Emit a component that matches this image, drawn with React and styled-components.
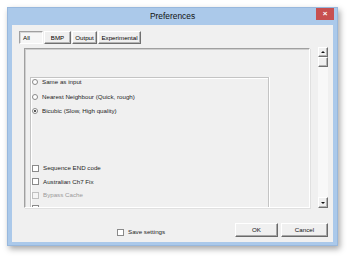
import React from 'react';
import styled, { createGlobalStyle } from 'styled-components';

const Global = createGlobalStyle`
  html, body { margin: 0; padding: 0; background: #ffffff; }
  body {
    width: 350px; height: 260px; overflow: hidden;
    font-family: "Liberation Sans", Arial, sans-serif;
    color: #1e1e1e;
  }
  * { box-sizing: border-box; }
`;

const Stage = styled.div`
  padding: 7px 0 0 7px;
`;

const Window = styled.div`
  width: 331px;
  height: 239px;
  background: #abc9ea;
  border: 1px solid #98b8dd;
  padding: 0 4px 3px;
  display: flex;
  flex-direction: column;
  box-shadow: 2px 3px 6px rgba(0, 0, 0, 0.35);
`;

const TitleBar = styled.div`
  height: 17px;
  display: grid;
  grid-template-columns: 1fr auto 1fr;
  align-items: start;
`;

const Title = styled.div`
  grid-column: 2;
  font-size: 8.4px;
  line-height: 16px;
  color: #111;
`;

const CloseButton = styled.div`
  grid-column: 3;
  justify-self: end;
  margin-right: -1px;
  width: 18px;
  height: 12px;
  background: #c75050;
  color: #fff;
  font-size: 8px;
  font-weight: bold;
  line-height: 12px;
  text-align: center;
`;

const Body = styled.div`
  flex: 1;
  background: #f0f0f0;
  display: flex;
  flex-direction: column;
  padding: 6px 5px 0 7px;
`;

const TabsRow = styled.div`
  display: flex;
  gap: 1px;
  height: 13px;
`;

const Tab = styled.div`
  width: ${p => p.$w}px;
  height: 13px;
  font-size: 6.2px;
  line-height: 11px;
  color: #000;
  text-align: ${p => (p.$active ? 'left' : 'center')};
  padding-left: ${p => (p.$active ? '3px' : '0')};
  background: ${p => (p.$active ? '#f6f6f6' : '#f0f0f0')};
  border: 1px solid;
  border-color: ${p => (p.$active ? '#a0a0a0 #ffffff #ffffff #a0a0a0' : '#ffffff #707070 #707070 #ffffff')};
  box-shadow: ${p => (p.$active ? 'inset 1px 1px #d8d8d8' : 'inset -1px -1px #b4b4b4')};
`;

const MainRow = styled.div`
  display: flex;
  align-items: flex-start;
  margin-top: 3px;
`;

const Panel = styled.div`
  margin: 1px 0 0 5px;
  width: 286px;
  height: 160px;
  border: 1px solid;
  border-color: #a0a0a0 #ffffff #ffffff #a0a0a0;
  box-shadow: inset 1px 1px #cfcfcf, 1px 1px #e0e0e0;
  overflow: hidden;
`;

const GroupBox = styled.div`
  margin: 28px 0 0 5px;
  width: 239px;
  height: 160px;
  border: 1px solid;
  border-bottom: none;
  border-color: #c4c4c4 #c4c4c4 transparent #c4c4c4;
  box-shadow: inset 1px 1px #ffffff, 1px 0 #ffffff;
  padding: 0 0 0 1px;
`;

const OptionList = styled.div`
  display: flex;
  flex-direction: column;
  gap: ${p => p.$gap}px;
  margin-top: ${p => p.$top}px;
`;

const Option = styled.div`
  display: flex;
  align-items: center;
  height: 8px;
  gap: 4px;
  font-size: 6.2px;
  line-height: 8px;
  white-space: nowrap;
  color: ${p => (p.$disabled ? '#9a9a9a' : '#1e1e1e')};
`;

const Radio = styled.span`
  width: 6px;
  height: 6px;
  border-radius: 50%;
  border: 1px solid #8a8a8a;
  background: #fff;
  display: flex;
  align-items: center;
  justify-content: center;
  flex: none;
  &::after {
    content: '';
    width: 2px;
    height: 2px;
    border-radius: 50%;
    background: ${p => (p.$checked ? '#222' : 'transparent')};
  }
`;

const Check = styled.span`
  width: 7px;
  height: 7px;
  border: 1px solid ${p => (p.$disabled ? '#c0c0c0' : '#8a8a8a')};
  background: ${p => (p.$disabled ? '#f4f4f4' : '#fff')};
  flex: none;
`;

const ScrollBar = styled.div`
  margin-left: 8px;
  width: 10px;
  height: 161px;
  display: flex;
  flex-direction: column;
  background: #f8f8f8;
`;

const ScrollButton = styled.div`
  height: ${p => p.$h}px;
  background: #f0f0f0;
  border: 1px solid;
  border-color: #ffffff #707070 #707070 #ffffff;
  box-shadow: inset -1px -1px #b4b4b4;
  display: flex;
  align-items: center;
  justify-content: center;
`;

const Arrow = styled.span`
  width: 0;
  height: 0;
  border-left: 2px solid transparent;
  border-right: 2px solid transparent;
  ${p => (p.$down ? 'border-top: 2px solid #111;' : 'border-bottom: 2px solid #111;')}
`;

const Track = styled.div`
  flex: 1;
`;

const BottomRow = styled.div`
  display: flex;
  align-items: flex-start;
  margin-top: 15px;
  height: 14px;
`;

const SaveOption = styled(Option)`
  margin: 5px 0 0 98px;
`;

const Spacer = styled.div`
  flex: 1;
`;

const Button = styled.div`
  width: ${p => p.$w}px;
  height: 14px;
  margin-left: ${p => p.$ml || 0}px;
  background: #f0f0f0;
  border: 1px solid;
  border-color: #ffffff #6a6a6a #6a6a6a #ffffff;
  box-shadow: inset -1px -1px #a8a8a8;
  font-size: 6.2px;
  line-height: 12px;
  text-align: center;
  color: #111;
`;

export default function App() {
  return (
    <>
      <Global />
      <Stage>
        <Window>
          <TitleBar>
            <Title>Preferences</Title>
            <CloseButton>×</CloseButton>
          </TitleBar>
          <Body>
            <TabsRow>
              <Tab $w={24} $active>All</Tab>
              <Tab $w={27}>BMP</Tab>
              <Tab $w={25}>Output</Tab>
              <Tab $w={43}>Experimental</Tab>
            </TabsRow>
            <MainRow>
              <Panel>
                <GroupBox>
                  <OptionList $gap={6.5} $top={0}>
                    <Option><Radio />Same as input</Option>
                    <Option><Radio />Nearest Neighbour (Quick, rough)</Option>
                    <Option><Radio $checked />Bicubic (Slow, High quality)</Option>
                  </OptionList>
                  <OptionList $gap={5.5} $top={49}>
                    <Option><Check />Sequence END code</Option>
                    <Option><Check />Australian Ch7 Fix</Option>
                    <Option $disabled><Check $disabled />Bypass Cache</Option>
                    <Option><Check />Source 640 PTS</Option>
                  </OptionList>
                </GroupBox>
              </Panel>
              <ScrollBar>
                <ScrollButton $h={10}><Arrow /></ScrollButton>
                <ScrollButton $h={10} />
                <Track />
                <ScrollButton $h={11}><Arrow $down /></ScrollButton>
              </ScrollBar>
            </MainRow>
            <BottomRow>
              <SaveOption><Check />Save settings</SaveOption>
              <Spacer />
              <Button $w={43}>OK</Button>
              <Button $w={47} $ml={3}>Cancel</Button>
            </BottomRow>
          </Body>
        </Window>
      </Stage>
    </>
  );
}
